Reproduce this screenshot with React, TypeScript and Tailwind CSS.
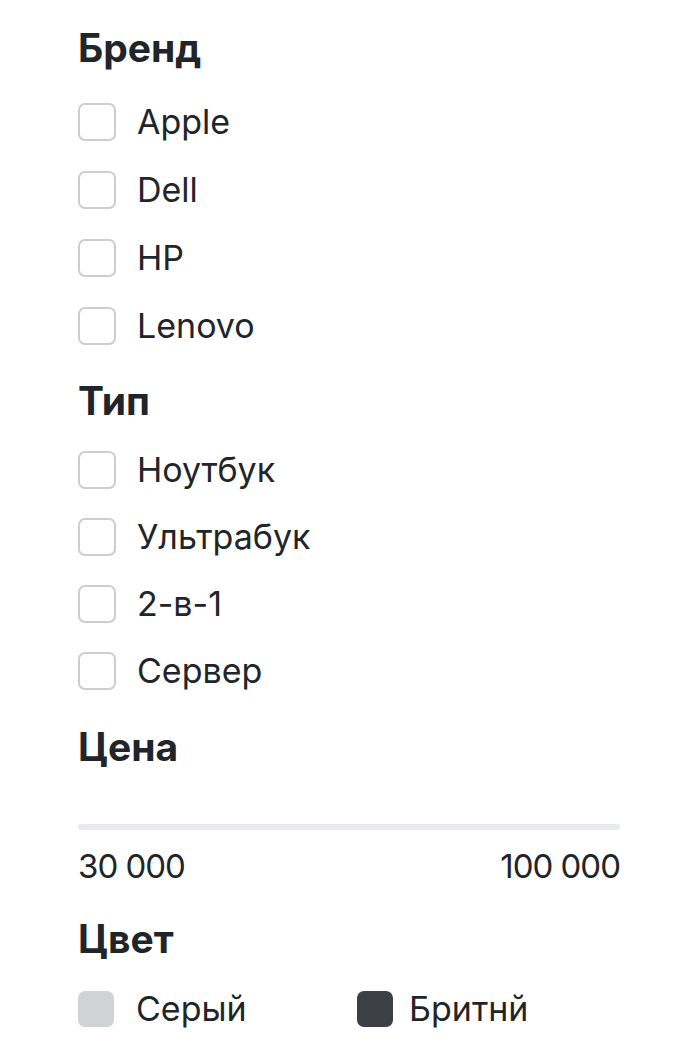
const brands = ['Apple', 'Dell', 'HP', 'Lenovo'];
const types = ['Ноутбук', 'Ультрабук', '2-в-1', 'Сервер'];

function CheckRow({ label, h }: { label: string; h: string }) {
  return (
    <label className={`flex items-center ${h}`}>
      <span className="w-[38px] h-[38px] rounded-[7px] border-2 border-[#cacdd1] bg-white shrink-0" />
      <span className="ml-[21px] text-[34px] leading-[40px] text-[#212529]">{label}</span>
    </label>
  );
}

export default function App() {
  return (
    <div
      className="min-h-[1050px] bg-white pl-[78px] pr-[80px] pt-[26px] text-[#212529]"
      style={{ fontFamily: 'Inter, "Noto Sans", sans-serif' }}
    >
      {/* Бренд */}
      <h5 className="h-[44px] leading-[44px] text-[39px] font-bold">Бренд</h5>
      <div className="mt-[18px]">
        {brands.map((b) => (
          <CheckRow key={b} label={b} h="h-[68px]" />
        ))}
      </div>

      {/* Тип */}
      <h5 className="mt-[19px] h-[44px] leading-[44px] text-[39px] font-bold">Тип</h5>
      <div className="mt-[13px]">
        {types.map((t) => (
          <CheckRow key={t} label={t} h="h-[67px]" />
        ))}
      </div>

      {/* Цена */}
      <h5 className="mt-[21px] h-[44px] leading-[44px] text-[39px] font-bold">Цена</h5>
      <div className="mt-[55px] h-[6px] w-full rounded-full bg-[#e9ecef]" />
      <div className="mt-[16px] flex justify-between h-[40px] leading-[40px] text-[33px] tracking-[-1px]">
        <span>30 000</span>
        <span>100 000</span>
      </div>

      {/* Цвет */}
      <h5 className="mt-[31px] h-[44px] leading-[44px] text-[39px] font-bold">Цвет</h5>
      <div className="mt-[30px] flex items-center h-[36px]">
        <div className="flex items-center w-[279px]">
          <span className="w-[36px] h-[36px] rounded-[7px] bg-[#cfd3d6]" />
          <span className="ml-[22px] text-[34px] leading-[40px]">Серый</span>
        </div>
        <div className="flex items-center">
          <span className="w-[36px] h-[36px] rounded-[7px] bg-[#3c4046]" />
          <span className="ml-[16px] text-[34px] leading-[40px]">Бритнй</span>
        </div>
      </div>
    </div>
  );
}
